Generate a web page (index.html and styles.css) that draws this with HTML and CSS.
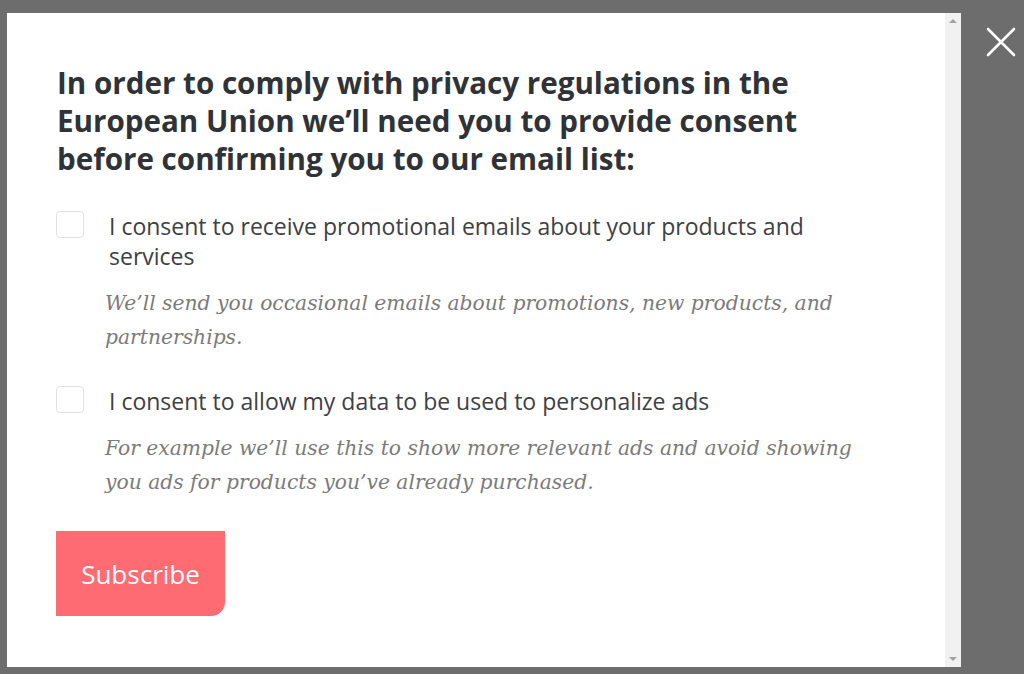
FILE: index.html
```html
<!DOCTYPE html>
<html lang="en">
<head>
<meta charset="utf-8">
<link rel="stylesheet" href="styles.css">
</head>
<body>
<div class="overlay">
  <div class="modal">
    <div class="content">
      <h1 class="title">In order to comply with privacy regulations in the European Union we’ll need you to provide consent before confirming you to our email list:</h1>
      <div class="option">
        <span class="box"></span>
        <div class="option-text">
          <p class="label">I consent to receive promotional emails about your products and services</p>
          <p class="desc">We’ll send you occasional emails about promotions, new products, and partnerships.</p>
        </div>
      </div>
      <div class="option">
        <span class="box"></span>
        <div class="option-text">
          <p class="label">I consent to allow my data to be used to personalize ads</p>
          <p class="desc">For example we’ll use this to show more relevant ads and avoid showing you ads for products you’ve already purchased.</p>
        </div>
      </div>
      <button class="subscribe">Subscribe</button>
    </div>
    <div class="scrollbar">
      <span class="arrow up"></span>
      <span class="arrow down"></span>
    </div>
  </div>
  <div class="close">
    <svg width="30" height="30" viewBox="0 0 30 30"><path d="M2 2 L28 28 M28 2 L2 28" stroke="#fff" stroke-width="2.6" stroke-linecap="round"/></svg>
  </div>
</div>
</body>
</html>
```
FILE: styles.css
```css
html, body {
  margin: 0;
  padding: 0;
  background: #6d6d6d;
  height: 100%;
  overflow: hidden;
}
.overlay {
  display: flex;
  padding: 13px 0 0 7px;
  height: 674px;
  box-sizing: border-box;
}
.modal {
  width: 954px;
  height: 654px;
  background: #fff;
  display: flex;
}
.content {
  flex: 1;
  padding: 51px 0 0 49px;
  font-family: "Open Sans", sans-serif;
}
.title {
  margin: 0 0 33px 1px;
  font-size: 29.6px;
  line-height: 38px;
  font-weight: 700;
  color: #2f3337;
  width: 790px;
}
.option {
  display: flex;
  gap: 25px;
  margin-bottom: 32px;
}
.option:last-of-type {
  margin-bottom: 0;
}
.box {
  flex: none;
  width: 28px;
  height: 27px;
  border: 1px solid #e2e2e2;
  border-radius: 4px;
  box-sizing: border-box;
}
.label {
  margin: 0;
  font-size: 23px;
  line-height: 30px;
  color: #3d4145;
  width: 730px;
}
.desc {
  margin: 15px 0 0 -4px;
  font-family: "DejaVu Serif", Georgia, serif;
  font-style: italic;
  font-size: 20.3px;
  line-height: 34px;
  color: #7b7b7b;
  width: 760px;
}
.subscribe {
  margin-top: 32px;
  width: 169px;
  height: 85px;
  border: 0;
  background: #ff6b73;
  color: #fff;
  font-family: "Open Sans", sans-serif;
  font-size: 26px;
  border-radius: 0 0 14px 0;
  padding: 0;
}
.scrollbar {
  width: 16px;
  background: #f1f1f1;
  display: flex;
  flex-direction: column;
  justify-content: space-between;
  align-items: center;
  padding: 6px 0;
  box-sizing: border-box;
}
.arrow {
  width: 0;
  height: 0;
  border-left: 4px solid transparent;
  border-right: 4px solid transparent;
}
.arrow.up { border-bottom: 4px solid #a3a3a3; }
.arrow.down { border-top: 4px solid #a3a3a3; }
.close {
  padding: 14px 0 0 25px;
}
```
